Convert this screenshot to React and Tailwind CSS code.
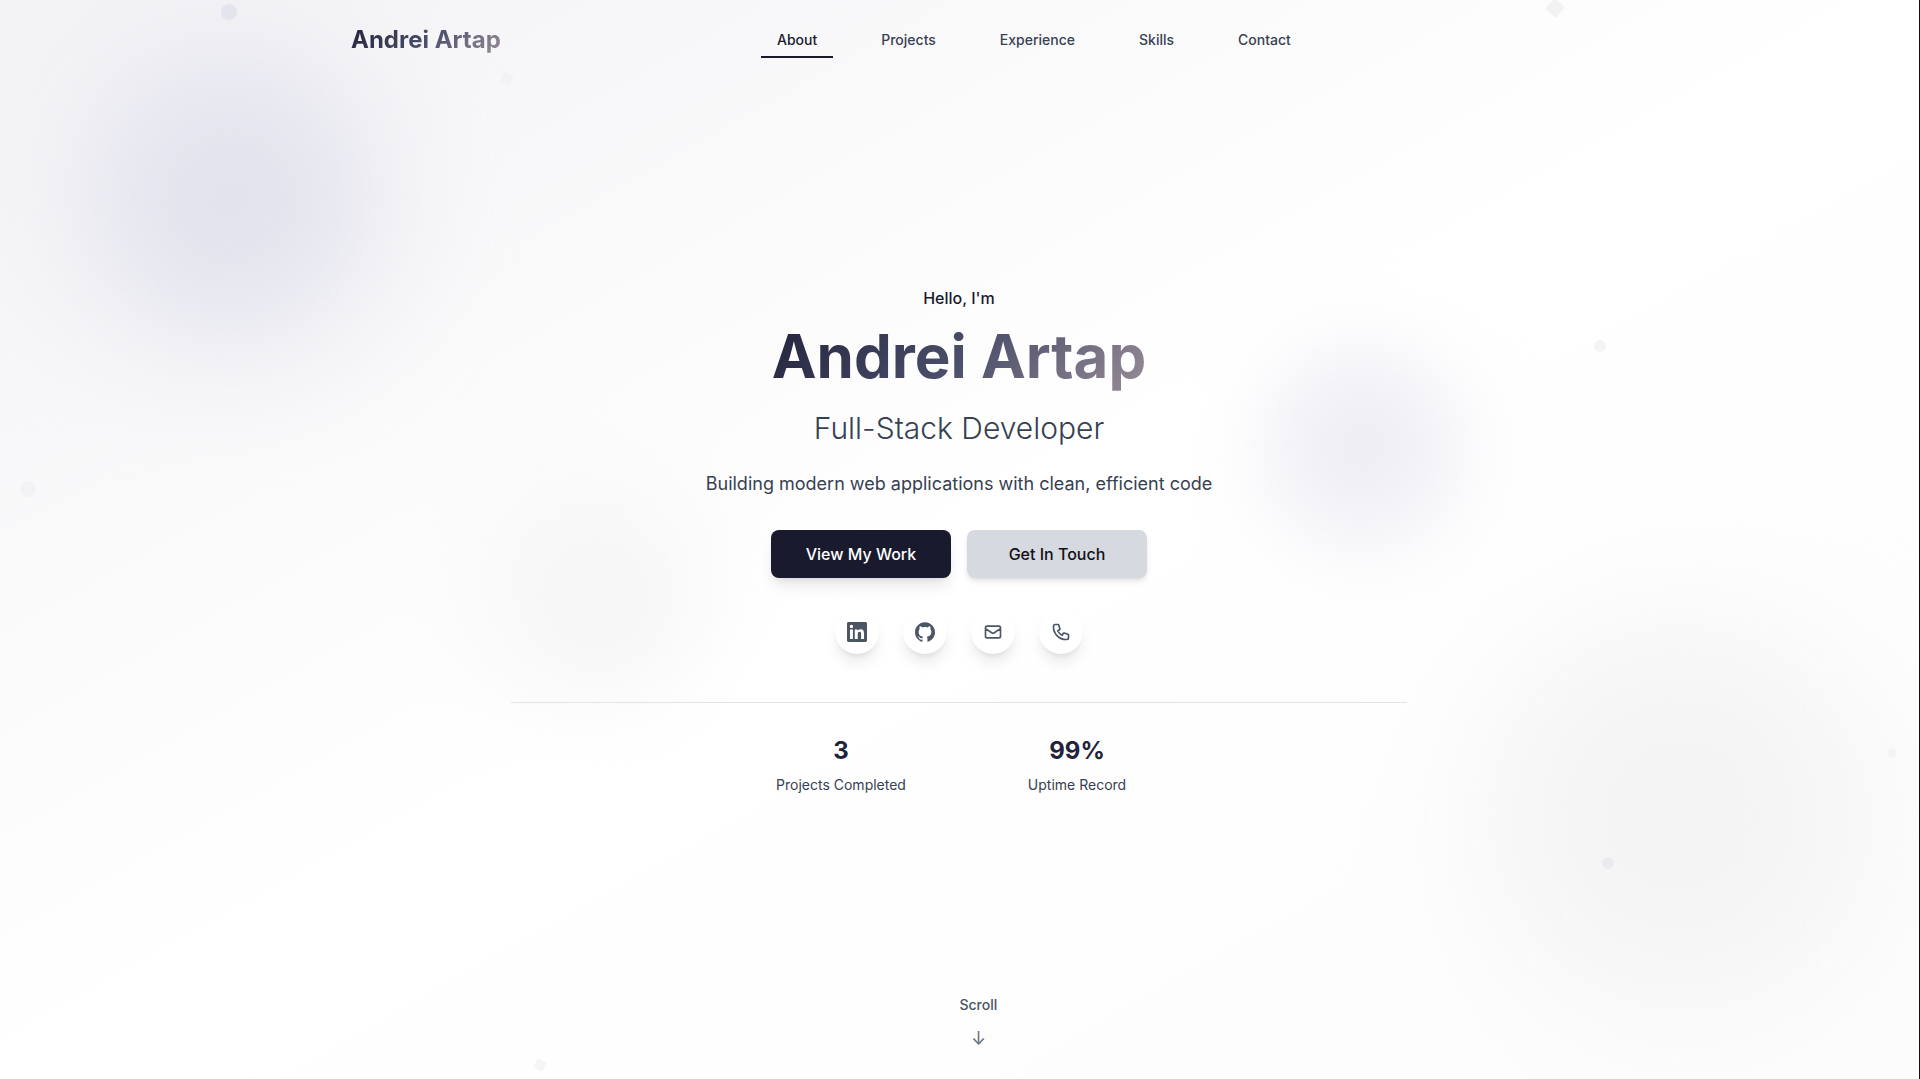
import React from "react";

const LINKS = ["About", "Projects", "Experience", "Skills", "Contact"];

const STATS = [
  { value: "3", label: "Projects Completed" },
  { value: "99%", label: "Uptime Record" },
];

function LinkedInIcon() {
  return (
    <svg viewBox="0 0 24 24" fill="currentColor" className="size-5" aria-hidden="true">
      <path d="M20.447 20.452h-3.554v-5.569c0-1.328-.027-3.037-1.852-3.037-1.853 0-2.136 1.445-2.136 2.939v5.667H9.351V9h3.414v1.561h.046c.477-.9 1.637-1.85 3.37-1.85 3.601 0 4.267 2.37 4.267 5.455v6.286zM5.337 7.433a2.062 2.062 0 0 1-2.063-2.065 2.064 2.064 0 1 1 2.063 2.065zm1.782 13.019H3.555V9h3.564v11.452zM22.225 0H1.771C.792 0 0 .774 0 1.729v20.542C0 23.227.792 24 1.771 24h20.451C23.2 24 24 23.227 24 22.271V1.729C24 .774 23.2 0 22.222 0h.003z" />
    </svg>
  );
}

function GitHubIcon() {
  return (
    <svg viewBox="0 0 24 24" fill="currentColor" className="size-5" aria-hidden="true">
      <path d="M12 .297c-6.63 0-12 5.373-12 12 0 5.303 3.438 9.8 8.205 11.385.6.113.82-.258.82-.577 0-.285-.01-1.04-.015-2.04-3.338.724-4.042-1.61-4.042-1.61C4.422 18.07 3.633 17.7 3.633 17.7c-1.087-.744.084-.729.084-.729 1.205.084 1.838 1.236 1.838 1.236 1.07 1.835 2.809 1.305 3.495.998.108-.776.417-1.305.76-1.605-2.665-.3-5.466-1.332-5.466-5.93 0-1.31.465-2.38 1.235-3.22-.135-.303-.54-1.523.105-3.176 0 0 1.005-.322 3.3 1.23.96-.267 1.98-.399 3-.405 1.02.006 2.04.138 3 .405 2.28-1.552 3.285-1.23 3.285-1.23.645 1.653.24 2.873.12 3.176.765.84 1.23 1.91 1.23 3.22 0 4.61-2.805 5.625-5.475 5.92.42.36.81 1.096.81 2.22 0 1.606-.015 2.896-.015 3.286 0 .315.21.69.825.57C20.565 22.092 24 17.592 24 12.297c0-6.627-5.373-12-12-12" />
    </svg>
  );
}

function OutlineIcon({ d }) {
  return (
    <svg
      viewBox="0 0 24 24"
      fill="none"
      stroke="currentColor"
      strokeWidth="2"
      strokeLinecap="round"
      strokeLinejoin="round"
      className="size-5"
      aria-hidden="true"
    >
      <path d={d} />
    </svg>
  );
}

const MAIL_PATH =
  "M3 8l7.89 5.26a2 2 0 002.22 0L21 8M5 19h14a2 2 0 002-2V7a2 2 0 00-2-2H5a2 2 0 00-2 2v10a2 2 0 002 2z";
const PHONE_PATH =
  "M3 5a2 2 0 012-2h3.28a1 1 0 01.948.684l1.498 4.493a1 1 0 01-.502 1.21l-2.257 1.13a11.042 11.042 0 005.516 5.516l1.13-2.257a1 1 0 011.21-.502l4.493 1.498a1 1 0 01.684.949V19a2 2 0 01-2 2h-1C9.716 21 3 14.284 3 6V5z";

const SOCIALS = [
  { label: "LinkedIn", icon: <LinkedInIcon /> },
  { label: "GitHub", icon: <GitHubIcon /> },
  { label: "Email", icon: <OutlineIcon d={MAIL_PATH} /> },
  { label: "Phone", icon: <OutlineIcon d={PHONE_PATH} /> },
];

/* Soft colour clouds and small floating shapes behind the content */
function Backdrop() {
  return (
    <div aria-hidden="true" className="pointer-events-none absolute inset-0 overflow-hidden">
      <div className="absolute left-[12%] top-[198px] size-72 -translate-1/2 rounded-full bg-[#e1e2ec] blur-3xl" />
      <div className="absolute left-[71%] top-[446px] size-48 -translate-1/2 rounded-full bg-[#efeef5] blur-2xl" />
      <div className="absolute left-[31%] top-[594px] size-56 -translate-1/2 rounded-full bg-[#f7f7f8] blur-2xl" />
      <div className="absolute right-[240px] top-[815px] size-96 translate-x-1/2 -translate-y-1/2 rounded-full bg-[#f5f4f5] blur-3xl" />

      <span className="absolute left-[221px] top-1 size-4 rounded-full bg-[#e3e4ee]" />
      <span className="absolute left-5 top-[481px] size-4 rounded-full bg-[#f3f3f5]" />
      <span className="absolute left-[502px] top-[73px] size-2.5 rotate-20 bg-[#f2f2f5]" />
      <span className="absolute left-[1548px] top-px size-[14px] rotate-40 rounded-xs bg-[#f2f2f4]" />
      <span className="absolute left-[1594px] top-[340px] size-3 rounded-full bg-[#f4f4f5]" />
      <span className="absolute left-[1888px] top-[749px] size-2 rotate-15 bg-[#f3f3f6]" />
      <span className="absolute left-[1602px] top-[857px] size-3 rounded-full bg-[#ebeaee]" />
      <span className="absolute left-[535px] top-[1060px] size-2.5 rotate-25 bg-[#f5f5f6]" />
    </div>
  );
}

function Header() {
  return (
    <header className="relative">
      <div className="mx-auto flex h-20 max-w-7xl items-center justify-between px-8">
        <a
          href="#about"
          className="bg-linear-135 from-[#22223b] via-[#4a4e69] to-[#9a8c98] bg-clip-text text-2xl font-bold text-transparent"
        >
          Andrei Artap
        </a>
        <nav className="flex gap-8">
          {LINKS.map((name, i) => (
            <a
              key={name}
              href={"#" + name.toLowerCase()}
              className={
                "relative px-4 py-2 text-sm leading-5 font-medium " +
                (i === 0 ? "text-[#1a1a2e]" : "text-[#374151]")
              }
            >
              {name}
              {i === 0 && <span className="absolute inset-x-0 bottom-0 h-0.5 bg-[#1a1a2e]" />}
            </a>
          ))}
        </nav>
        <div />
      </div>
    </header>
  );
}

export default function App() {
  return (
    <div className="relative flex min-h-screen flex-col border-r border-[#111111] bg-linear-[to_bottom_right,#f3f3f6,#ffffff_50%,#fcfcfc] pr-px font-[Inter,sans-serif]">
      <Backdrop />
      <Header />
      <main className="relative mx-auto flex w-full max-w-4xl grow flex-col items-center justify-center pb-[78px] text-center">
        <p className="text-base leading-6 font-medium text-[#1a1a2e]">Hello, I'm</p>
        <h1 className="mt-2.5 bg-linear-135 from-[#22223b] via-[#4a4e69] to-[#9a8c98] bg-clip-text text-6xl leading-[72px] font-bold text-transparent">
          Andrei Artap
        </h1>
        <h2 className="mt-4.5 text-3xl leading-9 font-light text-[#374151]">Full-Stack Developer</h2>
        <p className="mt-6 text-lg leading-7 text-[#374151]">
          Building modern web applications with clean, efficient code
        </p>
        <div className="mt-8 flex gap-4">
          <button className="h-12 w-[180px] rounded-lg bg-[#1a1a2e] text-base font-medium text-white shadow-lg">
            View My Work
          </button>
          <button className="h-12 w-[180px] rounded-lg bg-[#d6d9e0] text-base font-medium text-[#111114] shadow-md">
            Get In Touch
          </button>
        </div>
        <div className="mt-8 flex gap-6">
          {SOCIALS.map((s) => (
            <a
              key={s.label}
              href={"#" + s.label.toLowerCase()}
              aria-label={s.label}
              className="flex size-11 items-center justify-center rounded-full bg-white text-[#4b5563] shadow-lg"
            >
              {s.icon}
            </a>
          ))}
        </div>
        <div className="mt-12 w-full border-t border-[#e3e4e7] pt-8">
          <dl className="mx-auto grid max-w-md grid-cols-2 gap-6">
            {STATS.map((s) => (
              <div key={s.label} className="flex flex-col-reverse gap-2">
                <dt className="text-sm leading-5 text-[#374151]">{s.label}</dt>
                <dd className="text-2xl leading-8 font-bold text-[#22223b]">{s.value}</dd>
              </div>
            ))}
          </dl>
        </div>
      </main>
      <a
        href="#projects"
        className="absolute bottom-7 left-1/2 flex flex-col items-center gap-3 text-sm leading-5 font-medium text-[#4b5563]"
      >
        Scroll
        <span className="text-lg leading-6 font-normal text-[#6b7280]">↓</span>
      </a>
    </div>
  );
}
